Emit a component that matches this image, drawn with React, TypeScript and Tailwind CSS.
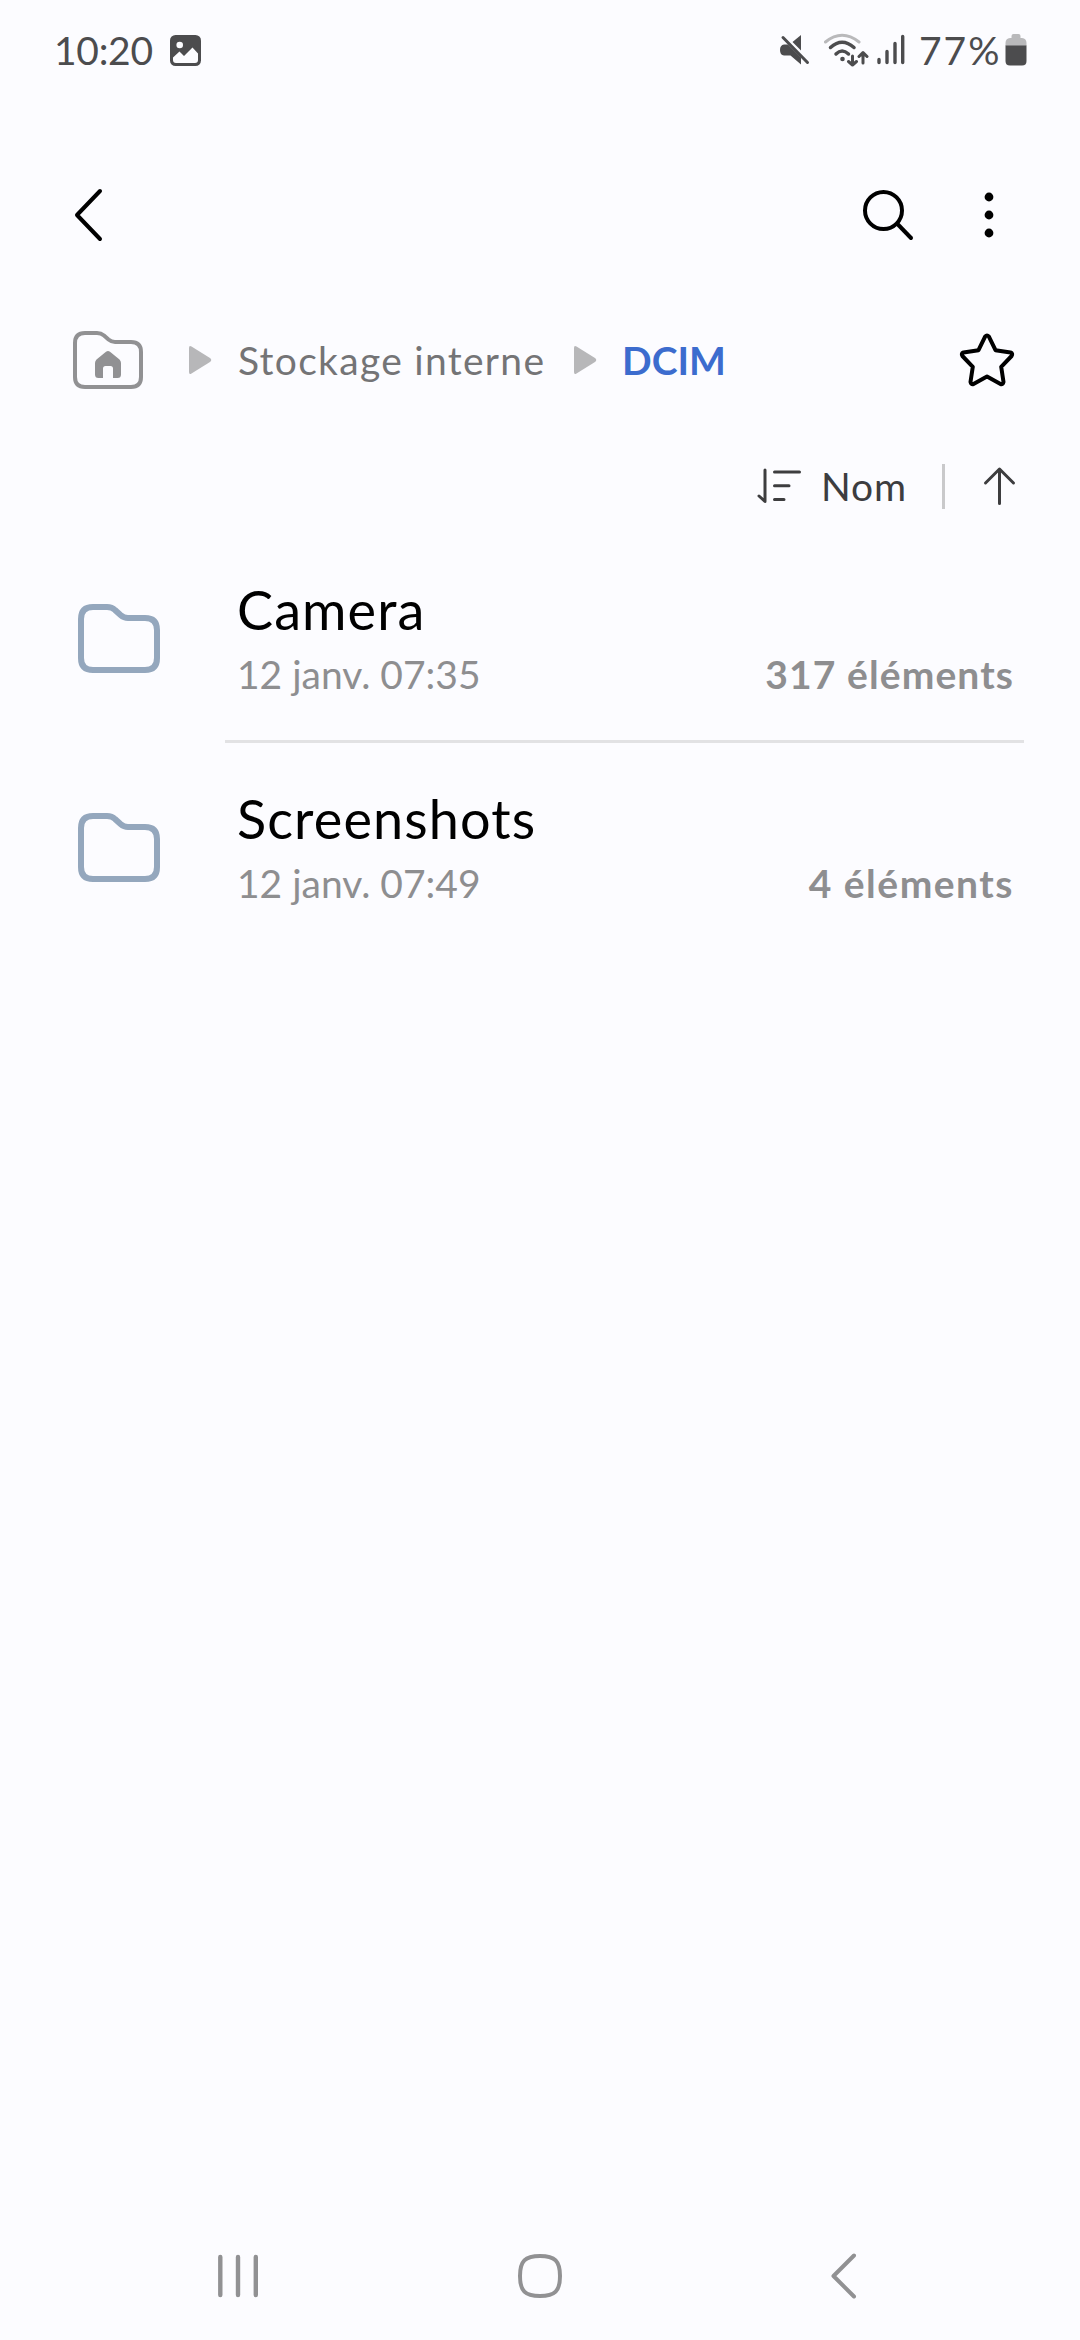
interface Folder {
  name: string;
  date: string;
  count: string;
  countClass: string;
}

const folders: Folder[] = [
  {
    name: 'Camera',
    date: '12 janv. 07:35',
    count: '317 éléments',
    countClass: 'tracking-[1.1px]',
  },
  {
    name: 'Screenshots',
    date: '12 janv. 07:49',
    count: '4 éléments',
    countClass: 'tracking-[1.5px]',
  },
];

function StatusBar() {
  return (
    <div className="flex h-[100px] items-center justify-between pl-[54px] pr-[53px] text-[#4c4c4e]">
      <div className="flex items-center">
        <span className="w-[116px] whitespace-nowrap text-[39px] leading-[48px] tracking-[-0.3px]">10:20</span>
        <svg width="31" height="31" viewBox="0 0 31 31">
          <rect width="31" height="31" rx="5.5" fill="#4c4c4e" />
          <circle cx="9.7" cy="10" r="3.3" fill="#fcfcff" />
          <path d="M3 22.5L9.5 16.5L14 21L22.5 12.5L28 18.5V25Q28 28 25 28H6Q3 28 3 25Z" fill="#fcfcff" />
        </svg>
      </div>
      <div className="flex items-center">
        <svg width="30" height="32" viewBox="0 0 30 32" fill="#4c4c4e">
          <path d="M4 10.5H8L21 23.5V30.5L10.5 21.5H4Q0 21 0 16Q0 11 4 10.5Z" />
          <path d="M12.5 8L21 1V16.5Z" />
          <path d="M3 3.5L27.5 28.5" stroke="#4c4c4e" strokeWidth="3" strokeLinecap="round" />
        </svg>
        <svg className="ml-[13px]" width="46" height="34" viewBox="0 0 46 34" fill="none" strokeWidth="3" strokeLinecap="round">
          <path d="M2.5 9Q19 -4.5 36 9" stroke="#b9b9bb" />
          <path d="M7.5 14.5Q19 4 31 14.5" stroke="#4c4c4e" strokeWidth="3.5" />
          <path d="M13 21Q19 15 25.5 21" stroke="#4c4c4e" strokeWidth="3.5" />
          <circle cx="19.5" cy="26" r="2.3" fill="#4c4c4e" />
          <path d="M29.5 23V32M25.5 28.5L29.5 32L33.5 28.5M40 30V20M36 23.5L40 19.5L44 23.5" stroke="#4c4c4e" strokeLinejoin="round" />
        </svg>
        <svg className="ml-[8px]" width="28" height="32" viewBox="0 0 28 32" stroke="#4c4c4e" strokeWidth="3.4" strokeLinecap="round">
          <path d="M2 25.5V28.5M10 17.5V28.5M18 9.5V28.5M25.7 2.5V28.5" />
        </svg>
        <span className="ml-[14px] w-[86px] whitespace-nowrap text-[39px] leading-[48px] tracking-[2px]">77%</span>
        <svg width="22" height="32" viewBox="0 0 22 32">
          <path d="M6.5 4V2Q6.5 0 8.5 0H13.5Q15.5 0 15.5 2V4H17Q21.5 4.5 21.5 9V12H0.5V9Q0.5 4.5 5 4Z" fill="#b9b9bb" />
          <path d="M0.5 11.5H21.5V27Q21.5 31.5 17 31.5H5Q0.5 31.5 0.5 27Z" fill="#4c4c4e" />
        </svg>
      </div>
    </div>
  );
}

function Toolbar() {
  return (
    <div className="flex h-[230px] items-center justify-between pl-[73px] pr-[66px]">
      <svg width="32" height="56" viewBox="0 0 32 56" fill="none" stroke="#000" strokeWidth="4" strokeLinecap="round" strokeLinejoin="round">
        <path d="M27 4L4 28L27 52" />
      </svg>
      <div className="flex items-center">
        <svg width="54" height="54" viewBox="0 0 54 54" fill="none" stroke="#000" strokeWidth="4" strokeLinecap="round">
          <circle cx="23.5" cy="22.5" r="18.5" />
          <path d="M37.5 36L51 50" />
        </svg>
        <svg className="ml-[60px]" width="40" height="54" viewBox="0 0 40 54">
          <circle cx="15" cy="9" r="4.4" />
          <circle cx="15" cy="27" r="4.4" />
          <circle cx="15" cy="45" r="4.4" />
        </svg>
      </div>
    </div>
  );
}

function Chevron() {
  return (
    <svg width="24" height="30" viewBox="0 0 24 30" fill="#b7b7b9">
      <path d="M1 3Q1 0 3.5 1.5L22 13Q24.5 15 22 17L3.5 28.5Q1 30 1 27Z" />
    </svg>
  );
}

function Breadcrumb() {
  return (
    <div className="flex h-[60px] items-center pl-[72px]">
      <svg width="72" height="60" viewBox="0 0 72 60">
        <path
          d="M3 13Q3 3 13 3H25Q29 3 32 5.5L36.5 9.5Q39.5 12 43 12H59Q69 12 69 22V47Q69 57 59 57H13Q3 57 3 47Z"
          fill="none"
          stroke="#919193"
          strokeWidth="4"
        />
        <path
          d="M34 21.8Q36 20.2 38 21.8L47.5 29.5Q49 31 49 33V44.5Q49 48 45.5 48H41V38.5Q41 36 38.5 36H33.5Q31 36 31 38.5V48H26.5Q23 48 23 44.5V33Q23 31 24.5 29.5Z"
          fill="#919193"
        />
      </svg>
      <div className="ml-[44px] flex items-center">
        <Chevron />
      </div>
      <span className="ml-[26px] w-[335px] whitespace-nowrap text-[39px] leading-[48px] tracking-[1.3px] text-[#747476]">Stockage interne</span>
      <Chevron />
      <span className="ml-[25px] flex-1 text-[39px] leading-[48px] font-bold text-[#3c6cce]">DCIM</span>
      <svg className="mr-[63px]" width="60" height="60" viewBox="0 0 60 60" fill="none" stroke="#000" strokeWidth="4" strokeLinejoin="round">
        <path d="M28.1 6.6Q30 4.5 31.9 6.6L38.5 20.2L53.5 22.5Q56.2 23.5 54.6 26L44.2 36.8L46.5 52Q46 54.8 43.5 54L30 46.5L16.5 54Q14 54.8 13.5 52L15.8 36.8L5.4 26Q3.8 23.5 6.5 22.5L21.5 20.2Z" />
      </svg>
    </div>
  );
}

function SortBar() {
  return (
    <div className="mt-[65px] flex h-[62px] items-center justify-end pr-[64px] text-[#3d3d3f]">
      <svg width="48" height="38" viewBox="0 0 48 38" fill="none" stroke="#3d3d3f" strokeWidth="3" strokeLinecap="round" strokeLinejoin="round">
        <path d="M10 3V34.5L4 29M19.5 5H44.5M19.5 18.7H34M19.5 32.5H29" />
      </svg>
      <span className="ml-[18px] w-[121px] text-[39px] leading-[48px] tracking-[0.8px]">Nom</span>
      <div className="h-[45px] w-[3px] bg-[#c9c9cb]" />
      <svg className="ml-[37px]" width="34" height="40" viewBox="0 0 34 40" fill="none" stroke="#3d3d3f" strokeWidth="3" strokeLinecap="round" strokeLinejoin="round">
        <path d="M17.5 37.5V3M3.5 17L17.5 3L31.5 17" />
      </svg>
    </div>
  );
}

function FolderRow({ folder }: { folder: Folder }) {
  return (
    <div className="flex h-[209px] items-center">
      <svg className="ml-[78px] shrink-0" width="82" height="70" viewBox="0 0 82 70" fill="none" stroke="#94a7bd" strokeWidth="6">
        <path d="M3 15Q3 3 15 3H29Q34 3 37 6L42.5 11Q46 14 50 14H67Q79 14 79 26V54Q79 66 67 66H15Q3 66 3 54Z" />
      </svg>
      <div className="ml-[77px] flex-1 pt-[4px]">
        <div className="text-[54px] leading-[66px] tracking-[1.1px] text-black">{folder.name}</div>
        <div className="flex items-center justify-between pr-[66px] text-[39px] leading-[62px] text-[#8e8e90]">
          <span>{folder.date}</span>
          <span className={`font-bold ${folder.countClass}`}>{folder.count}</span>
        </div>
      </div>
    </div>
  );
}

function NavBar() {
  return (
    <div className="flex h-[130px] items-center pl-[214px] pt-[2px]">
      <svg width="48" height="46" viewBox="0 0 48 46" stroke="#919193" strokeWidth="4.4" strokeLinecap="round">
        <path d="M6.3 4V42M24 4V42M41.8 4V42" />
      </svg>
      <svg className="ml-[255px]" width="46" height="46" viewBox="0 0 46 46" fill="none" stroke="#919193" strokeWidth="4">
        <path d="M23 3C38 3 43 8 43 23S38 43 23 43S3 38 3 23S8 3 23 3Z" />
      </svg>
      <svg className="ml-[268px]" width="30" height="46" viewBox="0 0 30 46" fill="none" stroke="#919193" strokeWidth="4" strokeLinecap="round" strokeLinejoin="round">
        <path d="M23 2.5L2.5 23L23 43.5" />
      </svg>
    </div>
  );
}

function App() {
  return (
    <div className="flex h-[2340px] w-[1080px] flex-col overflow-hidden bg-[#fcfcff] font-['Lato',sans-serif]">
      <StatusBar />
      <Toolbar />
      <Breadcrumb />
      <SortBar />

      {/* Folder list */}
      <main className="flex-1 pt-[17px]">
        {folders.map((folder, index) => (
          <div key={folder.name}>
            {index > 0 && <div className="-mt-[3px] ml-[225px] mr-[56px] h-[3px] bg-[#e2e2e4]" />}
            <FolderRow folder={folder} />
          </div>
        ))}
      </main>

      <NavBar />
    </div>
  );
}

export default App;
